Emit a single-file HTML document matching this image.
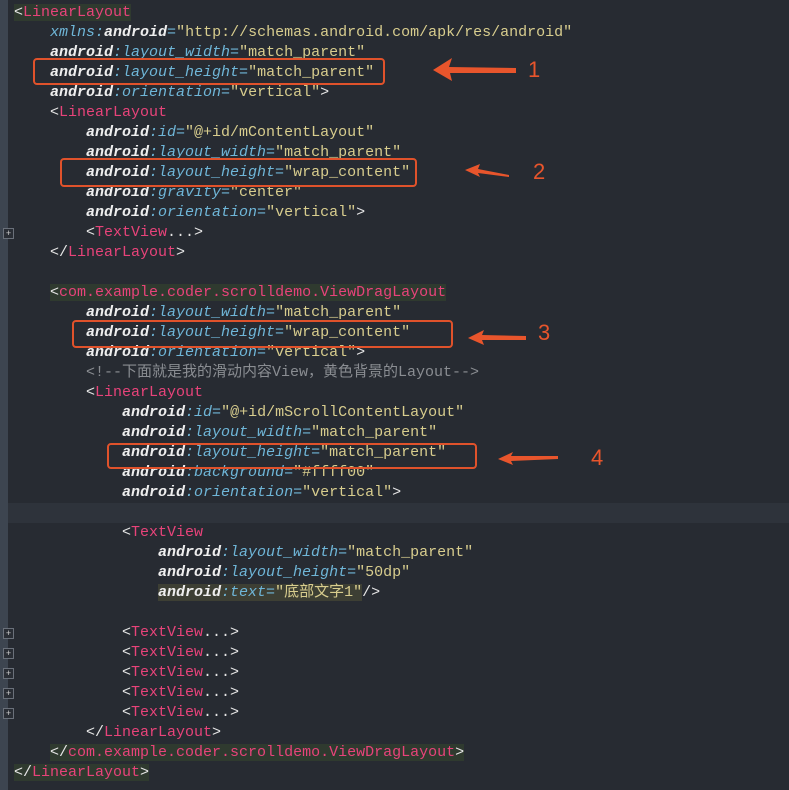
<!DOCTYPE html><html><head><meta charset="utf-8"><style>
body{margin:0;width:789px;height:790px;background:#272b32;overflow:hidden;position:relative;font-family:"Liberation Mono","Noto Sans CJK SC",monospace;font-size:15px}
.g{position:absolute;left:0;top:0;width:8px;height:790px;background:#3d4550}
.l{position:absolute;left:14px;height:20px;line-height:20px;white-space:pre;color:#e6e6e6}
.t{color:#e8437a}.b{color:#e6e6e6}.n{color:#eeeeee;font-style:italic;font-weight:bold}.a{color:#6fb6d8;font-style:italic}.v{color:#d8cd8e}.c{color:#8a8d92}
.m{background:#2f3a2f}
.bx{position:absolute;border:2px solid #e0522b;border-radius:4px}
.num{position:absolute;color:#e8552c;font-family:"Liberation Sans",sans-serif;font-size:22px}
.hl{position:absolute;left:8px;top:503px;width:781px;height:20px;background:#2e333b}
.f{position:absolute;left:3px;width:9px;height:9px;border:1px solid #6a707a;background:#2a2e35;color:#ccc;font:9px/9px "Liberation Sans",sans-serif;text-align:center}
</style></head><body>
<div class="g"></div><div class="hl"></div>
<div class="f" style="top:228px">+</div><div class="f" style="top:628px">+</div><div class="f" style="top:648px">+</div><div class="f" style="top:668px">+</div><div class="f" style="top:688px">+</div><div class="f" style="top:708px">+</div>
<div class="l" style="top:3px"><span class="m"><span class="b">&lt;</span><span class="t">LinearLayout</span></span></div>
<div class="l" style="top:23px">    <span class="a">xmlns:</span><span class="n">android</span><span class="a">=</span><span class="v">"http://schemas.android.com/apk/res/android"</span></div>
<div class="l" style="top:43px">    <span class="n">android</span><span class="a">:layout_width=</span><span class="v">"match_parent"</span></div>
<div class="l" style="top:63px">    <span class="n">android</span><span class="a">:layout_height=</span><span class="v">"match_parent"</span></div>
<div class="l" style="top:83px">    <span class="n">android</span><span class="a">:orientation=</span><span class="v">"vertical"</span>&gt;</div>
<div class="l" style="top:103px">    &lt;<span class="t">LinearLayout</span></div>
<div class="l" style="top:123px">        <span class="n">android</span><span class="a">:id=</span><span class="v">"@+id/mContentLayout"</span></div>
<div class="l" style="top:143px">        <span class="n">android</span><span class="a">:layout_width=</span><span class="v">"match_parent"</span></div>
<div class="l" style="top:163px">        <span class="n">android</span><span class="a">:layout_height=</span><span class="v">"wrap_content"</span></div>
<div class="l" style="top:183px">        <span class="n">android</span><span class="a">:gravity=</span><span class="v">"center"</span></div>
<div class="l" style="top:203px">        <span class="n">android</span><span class="a">:orientation=</span><span class="v">"vertical"</span>&gt;</div>
<div class="l" style="top:223px">        &lt;<span class="t">TextView</span>...&gt;</div>
<div class="l" style="top:243px">    &lt;/<span class="t">LinearLayout</span>&gt;</div>
<div class="l" style="top:283px">    <span class="m">&lt;<span class="t">com.example.coder.scrolldemo.ViewDragLayout</span></span></div>
<div class="l" style="top:303px">        <span class="n">android</span><span class="a">:layout_width=</span><span class="v">"match_parent"</span></div>
<div class="l" style="top:323px">        <span class="n">android</span><span class="a">:layout_height=</span><span class="v">"wrap_content"</span></div>
<div class="l" style="top:343px">        <span class="n">android</span><span class="a">:orientation=</span><span class="v">"vertical"</span>&gt;</div>
<div class="l" style="top:363px">        <span class="c">&lt;!--下面就是我的滑动内容View，黄色背景的Layout--&gt;</span></div>
<div class="l" style="top:383px">        &lt;<span class="t">LinearLayout</span></div>
<div class="l" style="top:403px">            <span class="n">android</span><span class="a">:id=</span><span class="v">"@+id/mScrollContentLayout"</span></div>
<div class="l" style="top:423px">            <span class="n">android</span><span class="a">:layout_width=</span><span class="v">"match_parent"</span></div>
<div class="l" style="top:443px">            <span class="n">android</span><span class="a">:layout_height=</span><span class="v">"match_parent"</span></div>
<div class="l" style="top:463px">            <span class="n">android</span><span class="a">:background=</span><span class="v">"#ffff00"</span></div>
<div class="l" style="top:483px">            <span class="n">android</span><span class="a">:orientation=</span><span class="v">"vertical"</span>&gt;</div>
<div class="l" style="top:523px">            &lt;<span class="t">TextView</span></div>
<div class="l" style="top:543px">                <span class="n">android</span><span class="a">:layout_width=</span><span class="v">"match_parent"</span></div>
<div class="l" style="top:563px">                <span class="n">android</span><span class="a">:layout_height=</span><span class="v">"50dp"</span></div>
<div class="l" style="top:583px">                <span style="background:#3d3f34"><span class="n">android</span><span class="a">:text=</span><span class="v">"底部文字1"</span></span>/&gt;</div>
<div class="l" style="top:623px">            &lt;<span class="t">TextView</span>...&gt;</div>
<div class="l" style="top:643px">            &lt;<span class="t">TextView</span>...&gt;</div>
<div class="l" style="top:663px">            &lt;<span class="t">TextView</span>...&gt;</div>
<div class="l" style="top:683px">            &lt;<span class="t">TextView</span>...&gt;</div>
<div class="l" style="top:703px">            &lt;<span class="t">TextView</span>...&gt;</div>
<div class="l" style="top:723px">        &lt;/<span class="t">LinearLayout</span>&gt;</div>
<div class="l" style="top:743px">    <span class="m">&lt;/<span class="t">com.example.coder.scrolldemo.ViewDragLayout</span>&gt;</span></div>
<div class="l" style="top:763px"><span class="m">&lt;/<span class="t">LinearLayout</span>&gt;</span></div>
<div class="bx" style="left:33px;top:58px;width:348px;height:23px"></div>
<div class="bx" style="left:60px;top:158px;width:353px;height:25px"></div>
<div class="bx" style="left:72px;top:320px;width:377px;height:24px"></div>
<div class="bx" style="left:107px;top:443px;width:366px;height:22px"></div>
<svg style="position:absolute;left:0;top:0" width="789" height="790" fill="#e8552c">
<polygon points="433,70 452,58 449,67 516,68 516,73 450,73 452,81"/>
<polygon points="465,170 480,164 478,169 509,175 509,177 478,173 480,177"/>
<polygon points="468,338 484,330 482,335 526,336 526,340 482,340 484,345"/>
<polygon points="498,459 513,452 511,456 558,456 558,459 511,461 513,465"/>
</svg>
<div class="num" style="left:528px;top:57px">1</div>
<div class="num" style="left:533px;top:159px">2</div>
<div class="num" style="left:538px;top:320px">3</div>
<div class="num" style="left:591px;top:445px">4</div>
</body></html>
